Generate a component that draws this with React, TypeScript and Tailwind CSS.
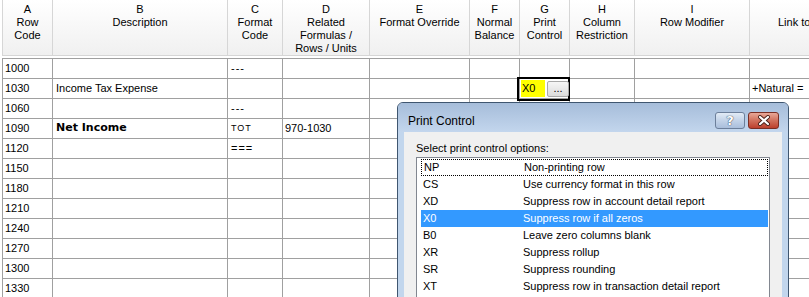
import React from "react";

type Col = { w: string; head: string[] };

const cols: Col[] = [
  { w: "w-[50px]", head: ["A", "Row", "Code"] },
  { w: "w-[175px]", head: ["B", "Description"] },
  { w: "w-[55px]", head: ["C", "Format", "Code"] },
  { w: "w-[87px]", head: ["D", "Related", "Formulas /", "Rows / Units"] },
  { w: "w-[100px]", head: ["E", "Format Override"] },
  { w: "w-[50px]", head: ["F", "Normal", "Balance"] },
  { w: "w-[50px]", head: ["G", "Print", "Control"] },
  { w: "w-[65px]", head: ["H", "Column", "Restriction"] },
  { w: "w-[115px]", head: ["I", "Row Modifier"] },
];

type Row = { code: string; b?: React.ReactNode; c?: React.ReactNode; d?: string; link?: string; sel?: boolean };

const rows: Row[] = [
  { code: "1000", c: "---" },
  { code: "1030", b: "Income Tax Expense", link: "+Natural =", sel: true },
  { code: "1060", c: "---" },
  { code: "1090", b: <span className="font-['DejaVu_Sans',sans-serif] font-bold text-[11px]">Net Income</span>, c: <span className="text-[9px]">TOT</span>, d: "970-1030" },
  { code: "1120", c: "===" },
  { code: "1150" },
  { code: "1180" },
  { code: "1210" },
  { code: "1240" },
  { code: "1270" },
  { code: "1300" },
  { code: "1330" },
];

const options = [
  ["NP", "Non-printing row"],
  ["CS", "Use currency format in this row"],
  ["XD", "Suppress row in account detail report"],
  ["X0", "Suppress row if all zeros"],
  ["B0", "Leave zero columns blank"],
  ["XR", "Suppress rollup"],
  ["SR", "Suppress rounding"],
  ["XT", "Suppress row in transaction detail report"],
];

export default function App() {
  return (
    <div className="relative w-[809px] h-[297px] overflow-hidden bg-white font-['Liberation_Sans',Arial,sans-serif] text-[11px] text-black">
      {/* Header */}
      <div className="ml-[2px] flex h-[56px] border-l border-b border-[#d6d6d6] bg-gradient-to-b from-white to-[#f0f0f0] w-[1000px]">
        {cols.map((c, i) => (
          <div key={i} className={`${c.w} shrink-0 border-r border-[#d6d6d6] pt-[3px] text-center leading-[13px]`}>
            {c.head.map((h, j) => (
              <div key={j} className="whitespace-nowrap">{h}</div>
            ))}
          </div>
        ))}
        <div className="w-[200px] shrink-0 pt-[16px] pl-[28px] leading-[13px] whitespace-nowrap">Link to</div>
      </div>
      <div className="h-[2px]" />
      {/* Body */}
      <div className="ml-[2px] border-l border-t border-[#a0a0a0] w-[1000px]">
        {rows.map((r, i) => (
          <div key={i} className="flex h-[20px] border-b border-[#a0a0a0]">
            <div className="w-[50px] shrink-0 border-r border-[#a0a0a0] pl-[2px] flex items-center">{r.code}</div>
            <div className="w-[175px] shrink-0 border-r border-[#a0a0a0] pl-[3px] flex items-center">{r.b}</div>
            <div className="w-[55px] shrink-0 border-r border-[#a0a0a0] pl-[3px] flex items-center tracking-[1px]">{r.c}</div>
            <div className="w-[87px] shrink-0 border-r border-[#a0a0a0] pl-[2px] flex items-center">{r.d}</div>
            <div className="w-[100px] shrink-0 border-r border-[#a0a0a0]" />
            <div className="w-[50px] shrink-0 border-r border-[#a0a0a0]" />
            <div className="relative w-[50px] shrink-0 border-r border-[#a0a0a0]">
              {r.sel && (
                <div className="absolute left-[-3px] top-[-2px] right-[-1px] bottom-[-3px] border-2 border-black z-10">
                  <div className="absolute left-[2px] top-[1px] w-[24px] h-[17px] bg-[#ffff00] pl-[1px] flex items-center">X0</div>
                  <div className="absolute left-[28px] top-[2px] w-[22px] h-[16px] rounded-[2px] border border-[#a8a8a8] bg-gradient-to-b from-[#f6f6f6] to-[#dcdcdc] flex items-center justify-center leading-none pb-[2px]">...</div>
                </div>
              )}
            </div>
            <div className="w-[65px] shrink-0 border-r border-[#a0a0a0]" />
            <div className="w-[115px] shrink-0 border-r border-[#a0a0a0]" />
            <div className="w-[200px] shrink-0 pl-[2px] flex items-center whitespace-nowrap">{r.link}</div>
          </div>
        ))}
      </div>

      {/* Dialog */}
      <div className="absolute left-[397px] top-[102px] w-[392px] h-[240px] rounded-t-[6px] border border-[#3f5670] bg-[#c2d6ed] flex flex-col overflow-hidden">
        <div className="h-[29px] shrink-0 flex items-start justify-between bg-gradient-to-b from-[#a6bdda] to-[#c3d6ed] pl-[10px] pr-[9px] pt-[9px]">
          <div className="text-[12px] leading-[16px] pt-[1px]">Print Control</div>
          <div className="flex gap-[3px]">
            <div className="w-[30px] h-[17px] rounded-[3px] border border-[#6c7f9a] bg-gradient-to-b from-[#e2ebf6] via-[#c3d3e8] to-[#a9bedb] flex items-center justify-center">
              <span className="text-white font-bold text-[13px] leading-none font-['DejaVu_Sans',sans-serif] [text-shadow:0_0_1px_#2b3b55,0_0_1px_#2b3b55]">?</span>
            </div>
            <div className="w-[31px] h-[17px] rounded-[3px] border border-[#7a2e24] bg-gradient-to-b from-[#e8a898] via-[#d0705c] to-[#bc3f2c] flex items-center justify-center">
              <svg width="14" height="11" viewBox="0 0 14 11">
                <path d="M3 2 L11 9 M11 2 L3 9" stroke="#4a2018" strokeWidth="4" strokeLinecap="round" />
                <path d="M3 2 L11 9 M11 2 L3 9" stroke="#ffffff" strokeWidth="2.2" strokeLinecap="round" />
              </svg>
            </div>
          </div>
        </div>
        <div className="flex flex-1 px-[6px]">
          <div className="flex-1 bg-[#f0f0f0] pl-[12px] pt-[9px]">
            <div className="h-[14px] leading-[14px]">Select print control options:</div>
            <div className="mt-[2px] w-[354px] h-[200px] border border-[#828790] bg-white pl-[4px] pr-[1px] pt-[1px]">
              {options.map(([code, desc], i) => (
                <div
                  key={code}
                  className={`flex h-[17px] items-center pl-[2px] whitespace-nowrap ${
                    i === 3 ? "bg-[#3399ff] text-white" : ""
                  } ${i === 0 ? "border border-dotted border-black pl-[1px]" : ""}`}
                >
                  <div className="w-[100px] shrink-0">{code}</div>
                  <div>{desc}</div>
                </div>
              ))}
            </div>
          </div>
        </div>
      </div>
    </div>
  );
}
